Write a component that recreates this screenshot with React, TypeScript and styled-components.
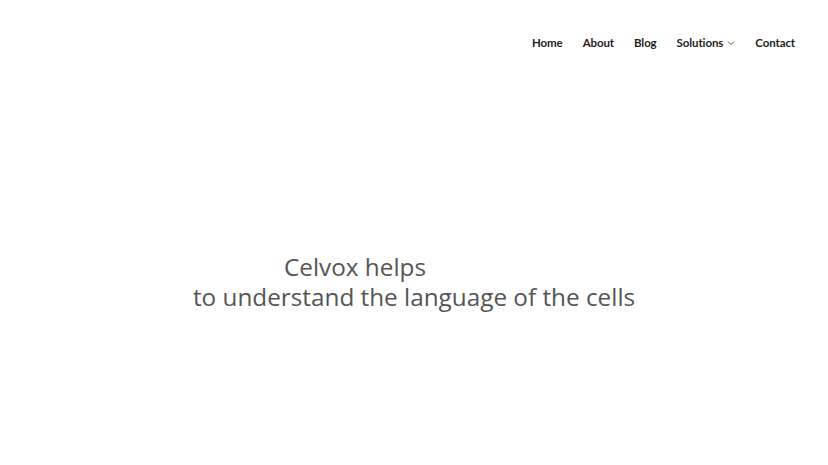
import React from "react";
import styled, { createGlobalStyle } from "styled-components";

const GlobalStyle = createGlobalStyle`
  html, body {
    margin: 0;
    padding: 0;
    background: #ffffff;
  }
  body {
    font-family: "Open Sans", "Noto Sans", sans-serif;
  }
`;

const Page = styled.div`
  width: 828px;
  height: 465px;
  display: flex;
  flex-direction: column;
  overflow: hidden;
`;

const Header = styled.header`
  height: 85px;
  display: flex;
  justify-content: flex-end;
  align-items: center;
  padding-right: 33px;
`;

const Nav = styled.nav`
  display: flex;
  align-items: center;
  gap: 20px;
`;

const NavLink = styled.a`
  display: flex;
  align-items: center;
  gap: 4px;
  font-family: "Lato", sans-serif;
  font-size: 11.5px;
  font-weight: 700;
  letter-spacing: -0.1px;
  color: #1e1e1e;
  text-decoration: none;
  cursor: pointer;
`;

const Hero = styled.main`
  flex: 1;
  display: flex;
  flex-direction: column;
  align-items: center;
  padding-top: 167px;
`;

const Title = styled.h1`
  margin: 0;
  font-family: "Open Sans", sans-serif;
  font-weight: 400;
  font-size: 24.3px;
  line-height: 30px;
  color: #555555;
  text-align: center;
`;

const Line = styled.span<{ $shift?: number }>`
  display: block;
  margin-right: ${(p) => p.$shift ?? 0}px;
`;

function Chevron() {
  return (
    <svg width="8" height="6" viewBox="0 0 8 6" fill="none">
      <path d="M1 1.5L4 4.5L7 1.5" stroke="#555" strokeWidth="1" />
    </svg>
  );
}

export default function App() {
  return (
    <>
      <GlobalStyle />
      <Page>
        <Header>
          <Nav>
            <NavLink>Home</NavLink>
            <NavLink>About</NavLink>
            <NavLink>Blog</NavLink>
            <NavLink>
              Solutions <Chevron />
            </NavLink>
            <NavLink>Contact</NavLink>
          </Nav>
        </Header>
        <Hero>
          <Title>
            <Line $shift={118}>Celvox helps</Line>
            <Line>to understand the language of the cells</Line>
          </Title>
        </Hero>
      </Page>
    </>
  );
}
